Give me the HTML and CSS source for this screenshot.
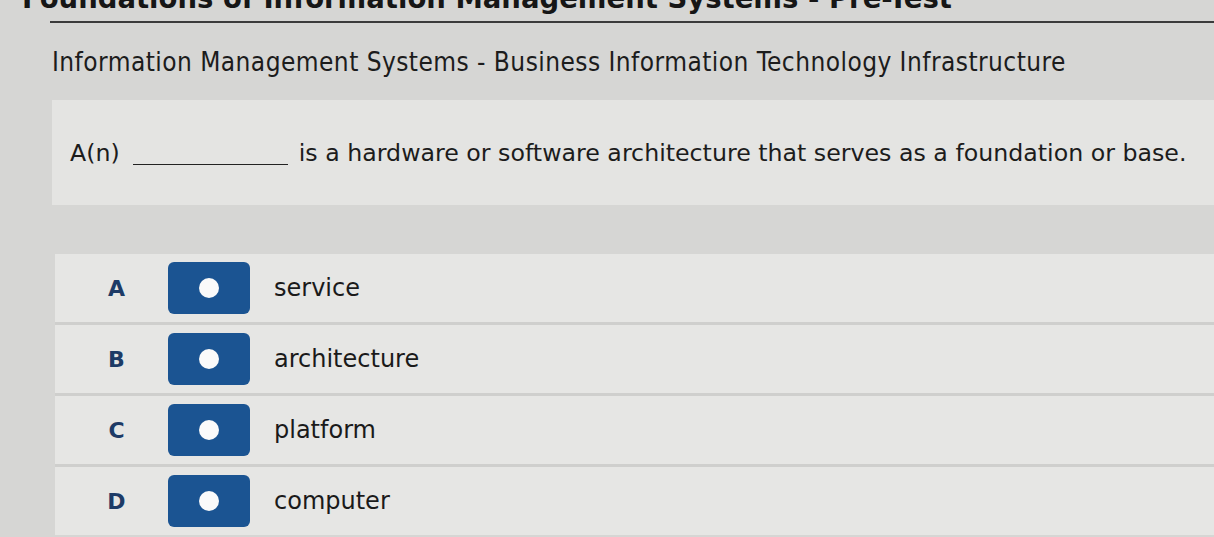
FILE: index.html
```html
<!DOCTYPE html>
<html lang="en">
<head>
<meta charset="utf-8">
<title>Pre-Test</title>
<link rel="stylesheet" href="styles.css">
</head>
<body>
<h1 class="title">Foundations of Information Management Systems - Pre-Test</h1>
<div class="rule"></div>
<h2 class="subtitle">Information Management Systems - Business Information Technology Infrastructure</h2>
<div class="question">
  <p class="prompt">A(n) <span class="blank"></span> is a hardware or software architecture that serves as a foundation or base.</p>
</div>
<div class="options">
  <div class="option"><span class="letter">A</span><span class="radio"><span class="dot"></span></span><span class="answer">service</span></div>
  <div class="option"><span class="letter">B</span><span class="radio"><span class="dot"></span></span><span class="answer">architecture</span></div>
  <div class="option"><span class="letter">C</span><span class="radio"><span class="dot"></span></span><span class="answer">platform</span></div>
  <div class="option"><span class="letter">D</span><span class="radio"><span class="dot"></span></span><span class="answer">computer</span></div>
</div>
</body>
</html>
```
FILE: styles.css
```css
html, body {
  margin: 0;
  padding: 0;
}
body {
  background: #d6d6d4;
  font-family: "DejaVu Sans", Verdana, sans-serif;
  color: #1a1a1a;
  overflow: hidden;
  height: 537px;
}
.title {
  margin: -18px 0 0 0;
  padding-left: 22px;
  font-size: 27.5px;
  line-height: 32px;
  font-weight: bold;
  white-space: nowrap;
  color: #161616;
}
.rule {
  margin: 7px 0 0 50px;
  height: 2px;
  background: #3b3b3b;
}
.subtitle {
  margin: 24px 0 0 52px;
  font-family: "DejaVu Sans Condensed", "DejaVu Sans", sans-serif;
  font-stretch: condensed;
  font-weight: normal;
  font-size: 26px;
  letter-spacing: 0.45px;
  line-height: 30px;
  white-space: nowrap;
  color: #1c1c1c;
}
.question {
  margin: 23px 0 0 52px;
  height: 105px;
  background: #e4e4e2;
  display: flex;
  align-items: center;
  padding-left: 18px;
}
.prompt {
  margin: 0;
  font-size: 23.7px;
  line-height: 28px;
  white-space: nowrap;
  color: #1c1c1c;
}
.blank {
  display: inline-block;
  width: 155px;
  border-bottom: 1px solid #222;
  margin: 0 3px 0 6px;
  vertical-align: -4px;
}
.options {
  margin: 49px 0 0 55px;
  display: flex;
  flex-direction: column;
  gap: 3px;
  background: #cfcfcd;
}
.option {
  height: 68px;
  background: #e6e6e4;
  display: flex;
  align-items: center;
}
.letter {
  width: 113px;
  box-sizing: border-box;
  padding-left: 10px;
  text-align: center;
  font-weight: bold;
  font-size: 22px;
  color: #1d3b66;
}
.radio {
  width: 82px;
  height: 52px;
  border-radius: 6px;
  background: #1b5492;
  display: flex;
  align-items: center;
  justify-content: center;
}
.dot {
  width: 20px;
  height: 20px;
  border-radius: 50%;
  background: #fafafa;
}
.answer {
  margin-left: 24px;
  font-size: 24px;
  color: #1a1a1a;
}
```
